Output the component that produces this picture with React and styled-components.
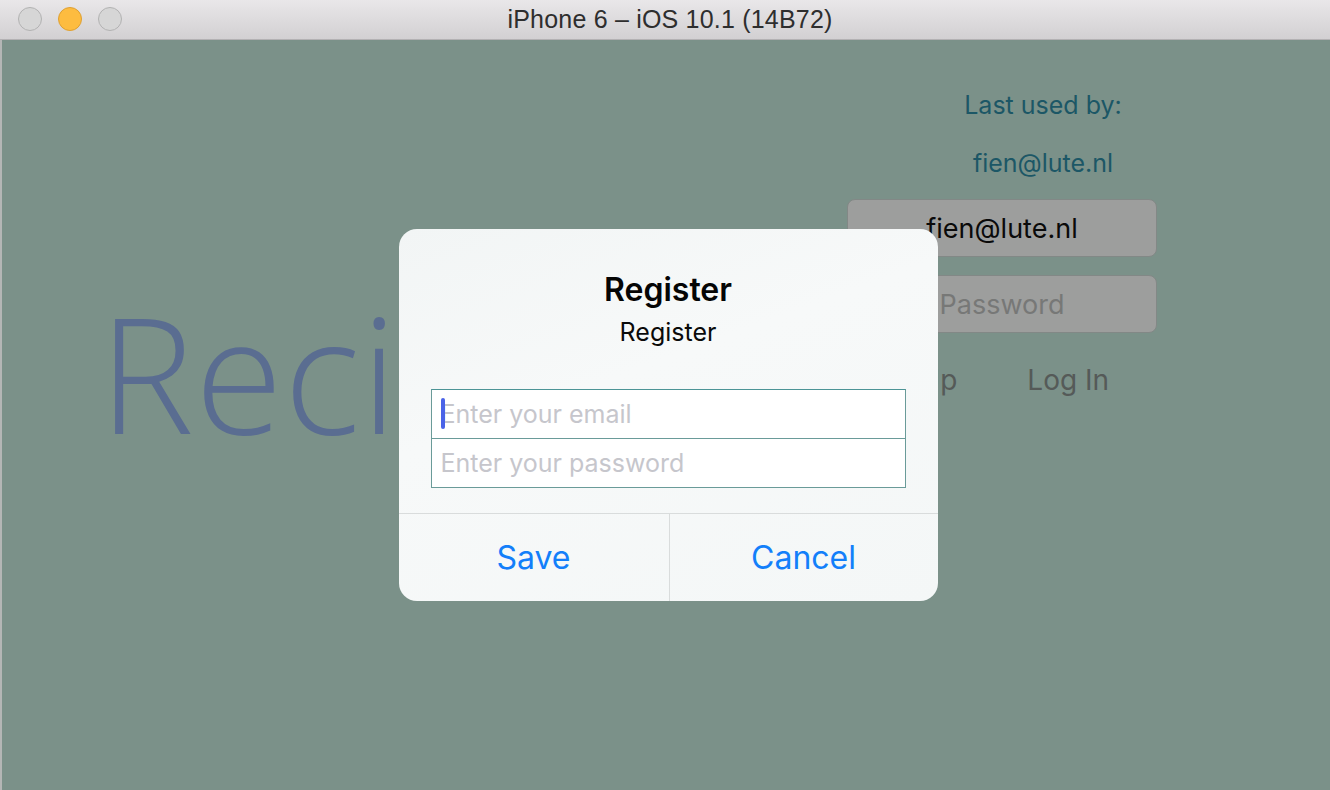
import React from "react"
import styled, { createGlobalStyle } from "styled-components"

const GlobalStyle = createGlobalStyle`
  html, body {
    margin: 0;
    padding: 0;
    width: 1330px;
    height: 790px;
    overflow: hidden;
    background: #7b9189;
  }
  * {
    box-sizing: border-box;
  }
`

const App = () => {
  return (
    <>
      <GlobalStyle />
      <Window>
        <TitleBar>
          <Lights>
            <Light />
            <Light $color='#fdbc40' $border='#dea032' />
            <Light />
          </Lights>
          <WindowTitle>iPhone 6 – iOS 10.1 (14B72)</WindowTitle>
        </TitleBar>
        <Screen>
          <Logo>Recipes</Logo>
          <LoginColumn>
            <LastUsed>Last used by:</LastUsed>
            <LastUsed>fien@lute.nl</LastUsed>
            <Field>fien@lute.nl</Field>
            <Field $placeholder>Password</Field>
            <LinkRow>
              <TextButton>Sign Up</TextButton>
              <TextButton>Log In</TextButton>
            </LinkRow>
          </LoginColumn>
          <Overlay>
            <Alert>
              <AlertBody>
                <AlertTitle>Register</AlertTitle>
                <AlertMessage>Register</AlertMessage>
                <Inputs>
                  <AlertInput $focused>
                    <Caret />
                    Enter your email
                  </AlertInput>
                  <AlertInput>Enter your password</AlertInput>
                </Inputs>
              </AlertBody>
              <Actions>
                <Action>Save</Action>
                <Action>Cancel</Action>
              </Actions>
            </Alert>
          </Overlay>
        </Screen>
      </Window>
    </>
  )
}

export default App

const Window = styled.div`
  display: flex;
  flex-direction: column;
  width: 1330px;
  height: 790px;
  font-family: Inter, "Liberation Sans", sans-serif;
`

const TitleBar = styled.div`
  position: relative;
  display: flex;
  align-items: center;
  justify-content: center;
  height: 40px;
  flex-shrink: 0;
  background: linear-gradient(#e9e7e9, #d2d0d2);
  border-bottom: 1px solid #b3b1b3;
`

const Lights = styled.div`
  position: absolute;
  left: 18px;
  top: 7px;
  display: flex;
  gap: 16px;
`

const Light = styled.span`
  width: 24px;
  height: 24px;
  border-radius: 50%;
  background: ${(p) => p.$color || "#d6d6d6"};
  border: 1px solid ${(p) => p.$border || "#b2b2b2"};
`

const WindowTitle = styled.div`
  font-family: "Liberation Sans", sans-serif;
  font-size: 25px;
  letter-spacing: 0.2px;
  color: #2e2e2e;
  margin-left: 10px;
`

const Screen = styled.div`
  position: relative;
  flex: 1;
  display: flex;
  background: #7b9189;
  border-left: 2px solid #b4b6b5;
`

const Logo = styled.div`
  flex-shrink: 0;
  width: 845px;
  padding: 252px 0 0 97px;
  font-family: "Open Sans", sans-serif;
  font-weight: 300;
  font-size: 160px;
  letter-spacing: 1px;
  line-height: 1;
  color: #5a6d91;
  white-space: nowrap;
`

const LoginColumn = styled.div`
  display: flex;
  flex-direction: column;
  align-items: center;
  width: 310px;
  padding-top: 50px;
`

const LastUsed = styled.div`
  margin-left: 82px;
  font-size: 25px;
  line-height: 30px;
  color: #1c5766;
  margin-bottom: 28px;

  & + & {
    margin-bottom: 21px;
  }
`

const Field = styled.div`
  display: flex;
  align-items: center;
  justify-content: center;
  width: 100%;
  height: 58px;
  margin-bottom: 18px;
  border-radius: 8px;
  background: #9d9e9d;
  border: 1px solid #828886;
  font-size: 27px;
  color: ${(p) => (p.$placeholder ? "#777877" : "#0a0a0a")};
`

const LinkRow = styled.div`
  align-self: stretch;
  display: flex;
  gap: 70px;
  padding-left: 6px;
  margin-top: 12px;
`

const TextButton = styled.div`
  font-size: 28px;
  line-height: 34px;
  color: #555a58;
`

const Overlay = styled.div`
  position: absolute;
  inset: 0;
  display: flex;
  align-items: center;
  justify-content: center;
  padding-left: 4px;
`

const Alert = styled.div`
  width: 539px;
  height: 372px;
  border-radius: 18px;
  overflow: hidden;
  background: linear-gradient(160deg, #f2f5f5, #f7f9f9 40%, #f4f7f7);
  display: flex;
  flex-direction: column;
`

const AlertBody = styled.div`
  flex: 1;
  display: flex;
  flex-direction: column;
  align-items: center;
  padding: 41px 32px 0;
`

const AlertTitle = styled.div`
  font-size: 32px;
  font-weight: 600;
  line-height: 40px;
  color: #050505;
`

const AlertMessage = styled.div`
  font-size: 25px;
  line-height: 30px;
  margin-top: 7px;
  color: #0a0a0a;
`

const Inputs = styled.div`
  width: 100%;
  margin-top: 42px;
  display: flex;
  flex-direction: column;
`

const AlertInput = styled.div`
  position: relative;
  display: flex;
  align-items: center;
  height: ${(p) => (p.$focused ? "50px" : "49px")};
  padding-left: 9px;
  background: #fff;
  border: 1px solid #6a9b99;
  border-top: ${(p) => (p.$focused ? "1px solid #4c9496" : "none")};
  font-size: 25px;
  color: #c6c6cc;
`

const Caret = styled.span`
  position: absolute;
  left: 9px;
  top: 8px;
  width: 4px;
  height: 31px;
  border-radius: 2px;
  background: #4a63e8;
`

const Actions = styled.div`
  display: grid;
  grid-template-columns: 270px 1fr;
  height: 88px;
  border-top: 1px solid #d9dcdc;
`

const Action = styled.div`
  display: flex;
  align-items: center;
  justify-content: center;
  font-size: 32px;
  color: #137ffa;

  & + & {
    border-left: 1px solid #d9dcdc;
  }
`
